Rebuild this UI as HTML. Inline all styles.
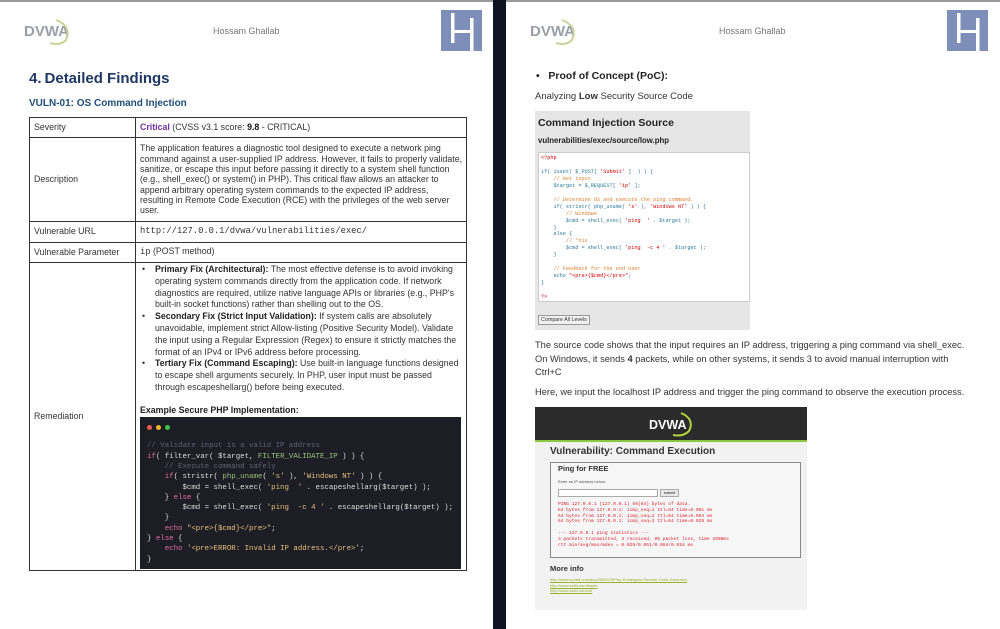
<!DOCTYPE html>
<html><head><meta charset="utf-8"><style>
*{margin:0;padding:0;box-sizing:border-box}
body{width:1000px;height:629px;position:relative;overflow:hidden;background:#fff;font-family:"Liberation Sans",sans-serif;color:#222}
.a{position:absolute;white-space:nowrap}
.mono{font-family:"Liberation Mono",monospace}
table{position:absolute;left:29px;top:117px;width:438px;border-collapse:collapse;font-size:8.8px;color:#333}
td{border:1px solid #333;vertical-align:middle;padding:1px 4px;line-height:11.8px}
td.l{width:106px}
.code{font-family:"Liberation Mono",monospace;font-size:7.4px;line-height:10.3px;white-space:pre}
.b{font-weight:bold;color:#222}
</style></head><body>
<div class="a" style="left:0;top:0;width:1000px;height:2px;background:#9a9a9a"></div>
<div class="a" style="left:493px;top:0;width:13px;height:629px;background:#0f1422"></div>

<svg class="a" style="left:22px;top:16px" width="52" height="30" viewBox="0 0 52 30"><text x="2" y="20" font-family="Liberation Sans" font-weight="bold" font-size="15" fill="#9aa0a8">DVWA</text><path d="M34 4 Q50 10 44 24 Q38 30 28 27" fill="none" stroke="#c9d49a" stroke-width="2"/></svg>
<div class="a" style="left:213px;top:26px;font-size:9px;color:#777">Hossam Ghallab</div>
<svg class="a" style="left:441px;top:10px" width="41" height="41"><rect width="41" height="41" fill="#7d8fb8"/><rect x="10" y="3" width="3.5" height="30" fill="#fff"/><rect x="10" y="20" width="20" height="3" fill="#fff"/><rect x="29" y="8" width="3.5" height="33" fill="#fff"/></svg>

<div class="a" style="left:29px;top:70px;font-size:15px;font-weight:bold;color:#1f3864">4.&thinsp;Detailed Findings</div>
<div class="a" style="left:29px;top:98px;font-size:10px;font-weight:bold;color:#1f4e79">VULN-01: OS Command Injection</div>

<table>
<tr style="height:20px"><td class="l">Severity</td><td><b style="color:#7030a0">Critical</b> (CVSS v3.1 score: <b style="color:#111">9.8</b> - CRITICAL)</td></tr>
<tr style="height:84px"><td class="l">Description</td><td style="padding-right:2px;line-height:10.3px">The application features a diagnostic tool designed to execute a network ping command against a user-supplied IP address. However, it fails to properly validate, sanitize, or escape this input before passing it directly to a system shell function (e.g., shell_exec() or system() in PHP). This critical flaw allows an attacker to append arbitrary operating system commands to the expected IP address, resulting in Remote Code Execution (RCE) with the privileges of the web server user.</td></tr>
<tr style="height:21px"><td class="l">Vulnerable URL</td><td class="mono" style="font-size:8.8px">http://127.0.0.1/dvwa/vulnerabilities/exec/</td></tr>
<tr style="height:20px"><td class="l">Vulnerable Parameter</td><td><span class="mono">ip</span> (POST method)</td></tr>
<tr style="height:308px"><td class="l">Remediation</td><td style="vertical-align:top;padding-top:1px;padding-bottom:0">
<div style="position:relative;padding-left:15px"><span style="position:absolute;left:2px">•</span><span class="b">Primary Fix (Architectural):</span> The most effective defense is to avoid invoking operating system commands directly from the application code. If network diagnostics are required, utilize native language APIs or libraries (e.g., PHP's built-in socket functions) rather than shelling out to the OS.</div>
<div style="position:relative;padding-left:15px"><span style="position:absolute;left:2px">•</span><span class="b">Secondary Fix (Strict Input Validation):</span> If system calls are absolutely unavoidable, implement strict Allow-listing (Positive Security Model). Validate the input using a Regular Expression (Regex) to ensure it strictly matches the format of an IPv4 or IPv6 address before processing.</div>
<div style="position:relative;padding-left:15px"><span style="position:absolute;left:2px">•</span><span class="b">Tertiary Fix (Command Escaping):</span> Use built-in language functions designed to escape shell arguments securely. In PHP, user input must be passed through escapeshellarg() before being executed.</div>
<div class="b" style="margin-top:11px">Example Secure PHP Implementation:</div>
<div style="background:#1d1d25;height:152px;margin-right:1px;padding:5px 7px;position:relative">
<div><span style="display:inline-block;width:5px;height:5px;border-radius:50%;background:#ee5a52;margin-right:4px"></span><span style="display:inline-block;width:5px;height:5px;border-radius:50%;background:#f0b429;margin-right:4px"></span><span style="display:inline-block;width:5px;height:5px;border-radius:50%;background:#3ec14a"></span></div>
<div class="code" style="color:#ddd;margin-top:8px"><span style="color:#5c6370">// Validate input is a valid IP address</span>
<span style="color:#e06c9e">if</span>( filter_var( $target, <span style="color:#98c379">FILTER_VALIDATE_IP</span> ) ) {
    <span style="color:#5c6370">// Execute command safely</span>
    <span style="color:#e06c9e">if</span>( stristr( <span style="color:#98c379">php_uname</span>( <span style="color:#e5c07b">'s'</span> ), <span style="color:#e5c07b">'Windows NT'</span> ) ) {
        $cmd = shell_exec( <span style="color:#e5c07b">'ping  '</span> . escapeshellarg($target) );
    } <span style="color:#e06c9e">else</span> {
        $cmd = shell_exec( <span style="color:#e5c07b">'ping  -c 4 '</span> . escapeshellarg($target) );
    }
    <span style="color:#e06c9e">echo</span> <span style="color:#e5c07b">"&lt;pre&gt;{$cmd}&lt;/pre&gt;"</span>;
} <span style="color:#e06c9e">else</span> {
    <span style="color:#e06c9e">echo</span> <span style="color:#e5c07b">'&lt;pre&gt;ERROR: Invalid IP address.&lt;/pre&gt;'</span>;
}</div>
</div>
</td></tr>
</table>

<svg class="a" style="left:528px;top:16px" width="52" height="30" viewBox="0 0 52 30"><text x="2" y="20" font-family="Liberation Sans" font-weight="bold" font-size="15" fill="#9aa0a8">DVWA</text><path d="M34 4 Q50 10 44 24 Q38 30 28 27" fill="none" stroke="#c9d49a" stroke-width="2"/></svg>
<div class="a" style="left:719px;top:26px;font-size:9px;color:#777">Hossam Ghallab</div>
<svg class="a" style="left:947px;top:10px" width="41" height="41"><rect width="41" height="41" fill="#7d8fb8"/><rect x="10" y="3" width="3.5" height="30" fill="#fff"/><rect x="10" y="20" width="20" height="3" fill="#fff"/><rect x="29" y="8" width="3.5" height="33" fill="#fff"/></svg>

<div class="a" style="left:536px;top:70px;font-size:10.5px;font-weight:bold;color:#222">•&nbsp;&nbsp;&nbsp;Proof of Concept (PoC):</div>
<div class="a" style="left:535px;top:91px;font-size:9.5px;color:#333">Analyzing <b>Low</b> Security Source Code</div>

<div class="a" style="left:535px;top:111px;width:215px;height:219px;background:#e6e6e6"></div>
<div class="a" style="left:538px;top:117px;font-size:10.5px;font-weight:bold;color:#222">Command Injection Source</div>
<div class="a" style="left:538px;top:136px;font-size:7.8px;font-weight:bold;color:#222">vulnerabilities/exec/source/low.php</div>
<div class="a" style="left:538px;top:152px;width:212px;height:150px;background:#fff;border:1px solid #ccc"></div>
<div class="a code" style="left:541px;top:155px;font-size:5.2px;line-height:6.95px;color:#2a7a9a"><span style="color:#c00">&lt;?php</span>

if( isset( $_POST[ <span style="color:#c00">'Submit'</span> ]  ) ) {
    <span style="color:#e08030">// Get input</span>
    $target = $_REQUEST[ <span style="color:#c00">'ip'</span> ];

    <span style="color:#e08030">// Determine OS and execute the ping command.</span>
    if( stristr( php_uname( <span style="color:#c00">'s'</span> ), <span style="color:#c00">'Windows NT'</span> ) ) {
        <span style="color:#e08030">// Windows</span>
        $cmd = shell_exec( <span style="color:#c00">'ping  '</span> . $target );
    }
    else {
        <span style="color:#e08030">// *nix</span>
        $cmd = shell_exec( <span style="color:#c00">'ping  -c 4 '</span> . $target );
    }

    <span style="color:#e08030">// Feedback for the end user</span>
    echo <span style="color:#c00">"&lt;pre&gt;{$cmd}&lt;/pre&gt;"</span>;
}

<span style="color:#c00">?&gt;</span></div>
<div class="a" style="left:538px;top:315px;width:52px;height:10px;border:1px solid #999;background:#f0f0f0;font-size:5.3px;line-height:8px;text-align:center;color:#333">Compare All Levels</div>

<div class="a" style="left:535px;top:339px;font-size:9.3px;line-height:13.7px;color:#333;white-space:normal;width:434px">The source code shows that the input requires an IP address, triggering a ping command via shell_exec. On Windows, it sends <b>4</b> packets, while on other systems, it sends 3 to avoid manual interruption with Ctrl+C</div>
<div class="a" style="left:535px;top:387px;font-size:9.3px;color:#333">Here, we input the localhost IP address and trigger the ping command to observe the execution process.</div>

<div class="a" style="left:535px;top:407px;width:272px;height:203px;background:#f2f2f2"></div>
<div class="a" style="left:535px;top:407px;width:272px;height:33px;background:#2b2b2b"></div>
<div class="a" style="left:535px;top:440px;width:272px;height:2px;background:#8dc63f"></div>
<svg class="a" style="left:647px;top:411px" width="50" height="26" viewBox="0 0 50 26"><text x="2" y="18" font-family="Liberation Sans" font-weight="bold" font-size="12.5" fill="#fff">DVWA</text><path d="M34 2 Q48 8 42 20 Q36 26 26 24" fill="none" stroke="#b5d33d" stroke-width="2"/></svg>
<div class="a" style="left:550px;top:446px;font-size:10px;font-weight:bold;color:#333">Vulnerability: Command Execution</div>
<div class="a" style="left:550px;top:462px;width:251px;height:96px;border:1px solid #888;background:#f6f6f6"></div>
<div class="a" style="left:558px;top:464px;font-size:7.5px;font-weight:bold;color:#333">Ping for FREE</div>
<div class="a" style="left:558px;top:479px;font-size:4px;color:#555">Enter an IP address below:</div>
<div class="a" style="left:558px;top:489px;width:100px;height:8px;border:1px solid #aaa;background:#fff"></div>
<div class="a" style="left:660px;top:489px;width:19px;height:8px;border:1px solid #aaa;background:#e8e8e8;font-size:3.8px;line-height:6px;text-align:center">submit</div>
<div class="a code" style="left:558px;top:502px;font-size:4.6px;line-height:5.8px;color:#e02030">PING 127.0.0.1 (127.0.0.1) 56(84) bytes of data.
64 bytes from 127.0.0.1: icmp_seq=1 ttl=64 time=0.061 ms
64 bytes from 127.0.0.1: icmp_seq=2 ttl=64 time=0.064 ms
64 bytes from 127.0.0.1: icmp_seq=3 ttl=64 time=0.029 ms

--- 127.0.0.1 ping statistics ---
3 packets transmitted, 3 received, 0% packet loss, time 2000ms
rtt min/avg/max/mdev = 0.029/0.051/0.064/0.016 ms</div>
<div class="a" style="left:550px;top:564px;font-size:7.5px;font-weight:bold;color:#333">More info</div>
<div class="a" style="left:550px;top:577px;font-size:4px;line-height:5.7px;color:#9ab32a;text-decoration:underline">http://www.scribd.com/doc/2530476/Php-Endangers-Remote-Code-Execution<br>http://www.ss64.com/bash/<br>http://www.ss64.com/nt/</div>
</body></html>
